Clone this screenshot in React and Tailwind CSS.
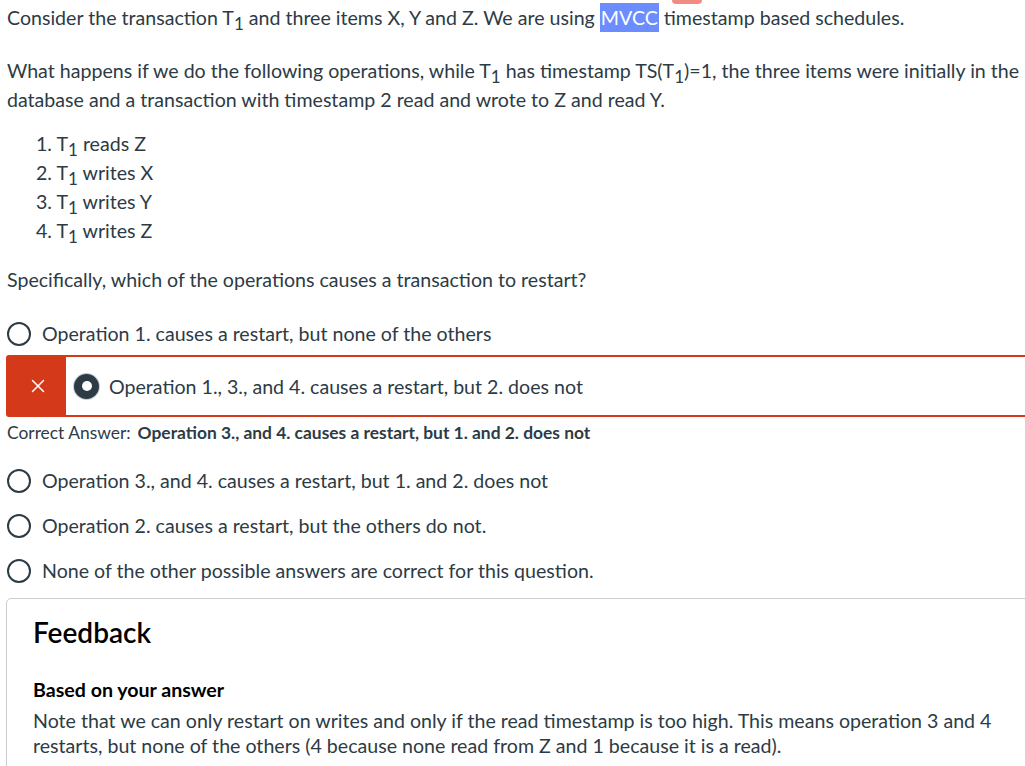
import { X } from "lucide-react";

const T1 = () => (
  <span>
    T<sub className="text-[17px] bottom-[-5px]">1</sub>
  </span>
);

function Radio({ checked }) {
  if (checked)
    return (
      <span className="flex items-center justify-center w-[25px] h-[25px] rounded-full bg-[#2d3b45] ring-1 ring-[#c7cdd1] shrink-0">
        <span className="w-[10px] h-[10px] rounded-full bg-white" />
      </span>
    );
  return <span className="w-[24px] h-[24px] rounded-full border-2 border-[#2d3b45] shrink-0" />;
}

function Option({ text }) {
  return (
    <div className="flex items-center h-[45px] pl-[7px] gap-[11px]">
      <Radio />
      <span>{text}</span>
    </div>
  );
}

export default function App() {
  return (
    <div className="w-screen overflow-hidden bg-white">
      <div
        className="relative w-[1060px] pl-[7px] text-[19.6px] leading-[29px] text-[#2d3b45]"
        style={{ fontFamily: "Lato, 'Open Sans', sans-serif" }}
      >
        <span className="absolute left-[672px] top-0 w-[30px] h-[4px] rounded-b-md bg-[#f28b82]" />
        <p className="pt-[3px] w-[1020px]">
          Consider the transaction <T1 /> and three items X, Y and Z. We are using{" "}
          <span className="bg-[#6b8dff] text-white px-[1px] py-[3px]">MVCC</span> timestamp based schedules.
        </p>
        <p className="mt-[24px] w-[1020px]">
          What happens if we do the following operations, while <T1 /> has timestamp TS(<T1 />)=1, the three items were initially in the database and a transaction with timestamp 2 read and wrote to Z and read Y.
        </p>
        <ol className="mt-[15px] pl-[29px]">
          <li>1. <T1 /> reads Z</li>
          <li>2. <T1 /> writes X</li>
          <li>3. <T1 /> writes Y</li>
          <li>4. <T1 /> writes Z</li>
        </ol>
        <p className="mt-[20px]">Specifically, which of the operations causes a transaction to restart?</p>

        <div className="mt-[17px] -ml-[7px]">
          <Option text="Operation 1. causes a restart, but none of the others" />
          <div className="flex items-stretch h-[62px] mt-[-1px] ml-[6px] border-2 border-[#d4391a] rounded-l-[3px]">
            <div className="w-[58px] bg-[#d4391a] flex items-center justify-center">
              <X size={22} strokeWidth={1.6} className="text-white ml-[2px]" />
            </div>
            <div className="flex items-center gap-[10px] pl-[8px]">
              <Radio checked />
              <span>Operation 1., 3., and 4. causes a restart, but 2. does not</span>
            </div>
          </div>
          <div className="pl-[7px] h-[30px] flex items-center text-[17.4px]">
            <span>Correct Answer:</span>
            <span className="ml-[7px] font-bold">Operation 3., and 4. causes a restart, but 1. and 2. does not</span>
          </div>
          <div className="mt-[11px]">
            <Option text="Operation 3., and 4. causes a restart, but 1. and 2. does not" />
            <Option text="Operation 2. causes a restart, but the others do not." />
            <Option text="None of the other possible answers are correct for this question." />
          </div>
        </div>

        <div className="mt-[5px] -ml-[1px] border border-[#c7cdd1] rounded-[5px] pl-[26px] pt-[14px] pb-[20px]">
          <h2 className="text-[28px] leading-[38px] font-semibold text-black">Feedback</h2>
          <h3 className="mt-[27px] font-bold text-black leading-[24px]">Based on your answer</h3>
          <p className="mt-[6px] w-[975px] leading-[25px]">
            Note that we can only restart on writes and only if the read timestamp is too high. This means operation 3 and 4 restarts, but none of the others (4 because none read from Z and 1 because it is a read).
          </p>
        </div>
      </div>
    </div>
  );
}
